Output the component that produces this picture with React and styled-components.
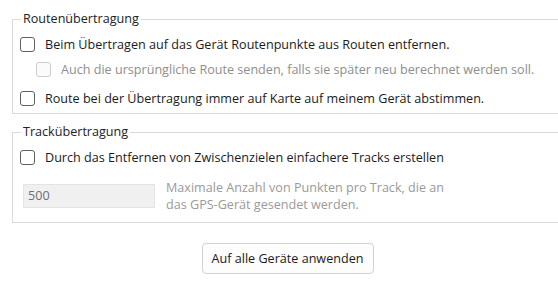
import styled, { createGlobalStyle } from "styled-components";

const GlobalStyle = createGlobalStyle`
  html, body {
    margin: 0;
    background: #ffffff;
    overflow: hidden;
  }
  body {
    font-family: "Open Sans", "Noto Sans", sans-serif;
    font-size: 12.6px;
    color: #1b1b1b;
  }
`;

const Page = styled.div`
  width: 558px;
  height: 300px;
  padding: 11px 0 0 12px;
  box-sizing: border-box;
  overflow: hidden;
`;

const Group = styled.fieldset`
  box-sizing: border-box;
  width: 600px;
  margin: 0 0 ${(p) => p.$gap || 0}px 0;
  padding: 0 7px ${(p) => p.$bottom}px 7px;
  border: 1px solid #dadada;
  min-width: 0;
`;

const Legend = styled.legend`
  padding: 0 2px;
  margin-left: 1px;
  line-height: 16px;
  color: #222222;
`;

const Row = styled.label`
  display: flex;
  align-items: center;
  height: 20px;
  margin-top: ${(p) => p.$top}px;
  margin-left: ${(p) => (p.$indent ? 16 : 0)}px;
  color: ${(p) => (p.$disabled ? "#8e8e8e" : "#1b1b1b")};
  white-space: nowrap;
`;

const Box = styled.span`
  flex: none;
  width: 13px;
  height: 13px;
  margin-right: 10px;
  border: 1px solid ${(p) => (p.$disabled ? "#cdcdcd" : "#606060")};
  border-radius: 3px;
  background: ${(p) => (p.$disabled ? "#fbfbfb" : "#ffffff")};
`;

const LimitRow = styled.div`
  display: flex;
  align-items: flex-start;
  height: 24px;
  margin: 17px 0 0 3px;
`;

const Field = styled.div`
  flex: none;
  box-sizing: border-box;
  width: 132px;
  height: 24px;
  padding-left: 4px;
  border: 1px solid #e4e4e4;
  background: #f0f0f0;
  color: #6e6e6e;
  line-height: 22px;
`;

const Hint = styled.div`
  margin-left: 11px;
  margin-top: -5px;
  color: #9a9a9a;
  line-height: 17px;
`;

const Footer = styled.div`
  display: flex;
  justify-content: center;
  padding-left: 5px;
`;

const Button = styled.button`
  width: 172px;
  height: 31px;
  border: 1px solid #d2d2d2;
  border-radius: 4px;
  background: #fdfdfd;
  font: inherit;
  color: #1b1b1b;
`;

function Check({ children, top, indent, disabled }) {
  return (
    <Row $top={top} $indent={indent} $disabled={disabled}>
      <Box $disabled={disabled} />
      {children}
    </Row>
  );
}

export default function App() {
  return (
    <>
      <GlobalStyle />
      <Page>
        <Group $bottom={5} $gap={10}>
          <Legend>Routenübertragung</Legend>
          <Check top={7}>
            Beim Übertragen auf das Gerät Routenpunkte aus Routen entfernen.
          </Check>
          <Check top={5} indent disabled>
            Auch die ursprüngliche Route senden, falls sie später neu berechnet
            werden soll.
          </Check>
          <Check top={9}>
            Route bei der Übertragung immer auf Karte auf meinem Gerät abstimmen.
          </Check>
        </Group>
        <Group $bottom={14} $gap={20}>
          <Legend>Trackübertragung</Legend>
          <Check top={7}>
            Durch das Entfernen von Zwischenzielen einfachere Tracks erstellen
          </Check>
          <LimitRow>
            <Field>500</Field>
            <Hint>
              Maximale Anzahl von Punkten pro Track, die an
              <br />
              das GPS-Gerät gesendet werden.
            </Hint>
          </LimitRow>
        </Group>
        <Footer>
          <Button>Auf alle Geräte anwenden</Button>
        </Footer>
      </Page>
    </>
  );
}
